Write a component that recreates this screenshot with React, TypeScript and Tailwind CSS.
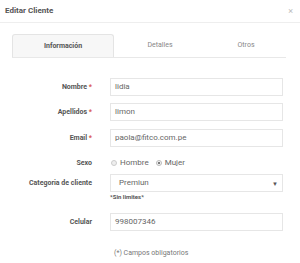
const Row = ({ label, req, children }: { label: string; req?: boolean; children: React.ReactNode }) => (
    <div className="flex items-center">
        <label className="w-[94px] shrink-0 pr-[2px] text-right text-[7px] font-bold text-[#555]">
            {label}
            {req && <span className="text-[#d9534f]"> *</span>}
        </label>
        <div className="ml-[16px] w-[173px]">{children}</div>
    </div>
);

const Field = ({ value }: { value: string }) => (
    <div className="flex h-[18px] items-center border border-[#e6e6e6] bg-white pl-[4px] text-[8px] text-[#666]">{value}</div>
);

const App = () => {
    return (
        <div className="h-[263px] w-[300px] overflow-hidden bg-white font-['Roboto',sans-serif]">
            <div className="flex h-[23px] items-center justify-between border-b border-[#eee] pl-[5px] pr-[7px]">
                <span className="text-[8px] font-bold text-[#555]">Editar Cliente</span>
                <span className="text-[9px] leading-none text-[#bbb]">×</span>
            </div>

            <div className="mx-[12px] mt-[11px] flex w-[274px] border-b border-[#e8e8e8]">
                <div className="flex h-[23px] w-[102px] items-center justify-center rounded-t-[3px] border border-b-0 border-[#e4e4e4] bg-[#f7f7f7] text-[7px] font-bold text-[#555]">
                    Información
                </div>
                <div className="flex h-[23px] w-[92px] items-center justify-center text-[7px] text-[#888]">Detalles</div>
                <div className="flex h-[23px] w-[80px] items-center justify-center text-[7px] text-[#888]">Otros</div>
            </div>

            <div className="mt-[20px] flex flex-col">
                <Row label="Nombre" req><Field value="lidia" /></Row>
                <div className="mt-[7px]"><Row label="Apellidos" req><Field value="limon" /></Row></div>
                <div className="mt-[8px]"><Row label="Email" req><Field value="paola@fitco.com.pe" /></Row></div>
                <div className="mt-[10px]">
                    <Row label="Sexo">
                        <div className="flex h-[12px] items-center pl-[1px] text-[8px] text-[#666]">
                            <span className="h-[6px] w-[6px] rounded-full border border-[#ccc] bg-[#eee]" />
                            <span className="ml-[3px]">Hombre</span>
                            <span className="ml-[7px] flex h-[6px] w-[6px] items-center justify-center rounded-full border border-[#bbb] bg-[#f3f3f3]">
                                <span className="h-[2px] w-[2px] rounded-full bg-[#555]" />
                            </span>
                            <span className="ml-[3px]">Mujer</span>
                        </div>
                    </Row>
                </div>
                <div className="mt-[5px]">
                    <Row label="Categoria de cliente">
                        <div className="flex h-[18px] items-center justify-between border border-[#e6e6e6] bg-white pl-[8px] pr-[4px] text-[8px] text-[#666]">
                            <span>Premiun</span>
                            <span className="text-[6px] text-[#555]">▼</span>
                        </div>
                    </Row>
                </div>
                <div className="ml-[110px] text-[6px] font-bold text-[#555]">*Sin limites*</div>
                <div className="mt-[12px]"><Row label="Celular"><Field value="998007346" /></Row></div>
                <div className="ml-[114px] mt-[17px] text-[7px] text-[#777]">(*) Campos obligatorios</div>
            </div>
        </div>
    );
};

export default App;
